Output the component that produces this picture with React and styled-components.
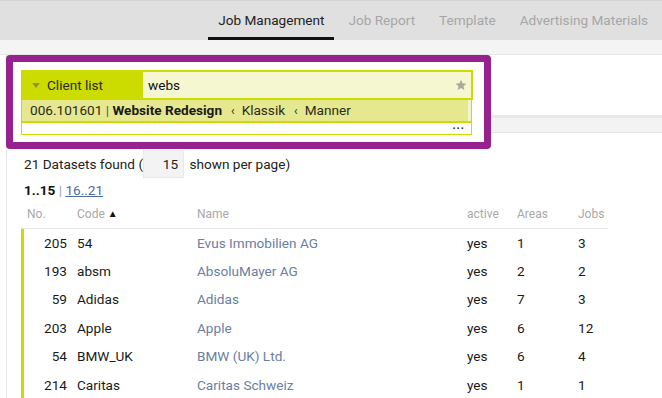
import React from "react";
import styled, { createGlobalStyle } from "styled-components";

const GlobalStyle = createGlobalStyle`
  html, body {
    margin: 0;
    padding: 0;
    background: #fff;
  }
  body {
    font-family: Roboto, "Liberation Sans", Arial, sans-serif;
    color: #222;
  }
  * {
    box-sizing: border-box;
  }
`;

const tabs = ["Job Management", "Job Report", "Template", "Advertising Materials"];

const clients = [
  { no: 205, code: "54", name: "Evus Immobilien AG", active: "yes", areas: 1, jobs: 3 },
  { no: 193, code: "absm", name: "AbsoluMayer AG", active: "yes", areas: 2, jobs: 2 },
  { no: 59, code: "Adidas", name: "Adidas", active: "yes", areas: 7, jobs: 3 },
  { no: 203, code: "Apple", name: "Apple", active: "yes", areas: 6, jobs: 12 },
  { no: 54, code: "BMW_UK", name: "BMW (UK) Ltd.", active: "yes", areas: 6, jobs: 4 },
  { no: 214, code: "Caritas", name: "Caritas Schweiz", active: "yes", areas: 1, jobs: 1 },
];

const App = () => {
  return (
    <>
      <GlobalStyle />
      <Page>
        <NavBar>
          {tabs.map((t, i) => (
            <Tab key={t} $active={i === 0}>
              {t}
            </Tab>
          ))}
        </NavBar>
        <SubBar />
        <Content>
          <SearchSlot />
          <Strip />
          <Body>
            <Summary>
              21 Datasets found (<CountBox>15</CountBox> shown per page)
            </Summary>
            <Pager>
              <b>1..15</b> <Sep>|</Sep> <PageLink>16..21</PageLink>
            </Pager>
            <Table>
              <HeadRow>
                <HeadCell>No.</HeadCell>
                <HeadCell>
                  Code <SortArrow>▲</SortArrow>
                </HeadCell>
                <HeadCell>Name</HeadCell>
                <HeadCell>active</HeadCell>
                <HeadCell>Areas</HeadCell>
                <HeadCell>Jobs</HeadCell>
              </HeadRow>
              <Rows>
                {clients.map((c) => (
                  <Row key={c.no}>
                    <NoCell>{c.no}</NoCell>
                    <Cell>{c.code}</Cell>
                    <NameCell>{c.name}</NameCell>
                    <Cell>{c.active}</Cell>
                    <Cell>{c.areas}</Cell>
                    <Cell>{c.jobs}</Cell>
                  </Row>
                ))}
              </Rows>
            </Table>
          </Body>
        </Content>

        <Highlight>
          <SearchRow>
            <ClientButton>
              <Caret />
              Client list
            </ClientButton>
            <SearchInput>
              <span>webs</span>
              <svg width="12" height="12" viewBox="0 0 24 24">
                <polygon
                  points="12,1.5 15.1,8.6 22.8,9.3 17,14.4 18.7,22 12,18 5.3,22 7,14.4 1.2,9.3 8.9,8.6"
                  fill="#a9aa99"
                />
              </svg>
            </SearchInput>
          </SearchRow>
          <Dropdown>
            <Suggestions>
              <Suggestion>
                006.101601 <Pipe>|</Pipe> <b>Website Redesign</b>
                <Crumb>‹</Crumb>Klassik<Crumb>‹</Crumb>Manner
              </Suggestion>
            </Suggestions>
            <More>...</More>
          </Dropdown>
        </Highlight>
      </Page>
    </>
  );
};

const Page = styled.div`
  position: relative;
  width: 662px;
  height: 398px;
  overflow: hidden;
`;

const NavBar = styled.nav`
  height: 40px;
  background: #e0e0e0;
  border-top: 1px solid #d4d4d4;
  display: flex;
  justify-content: flex-end;
  align-items: stretch;
  padding-right: 4px;
  gap: 4px;
`;

const Tab = styled.div`
  display: flex;
  align-items: center;
  padding: 2px 10px 0;
  font-size: 13.6px;
  color: ${(p) => (p.$active ? "#222" : "#a6a6a6")};
  border-bottom: 3px solid ${(p) => (p.$active ? "#111" : "transparent")};
`;

const SubBar = styled.div`
  height: 15px;
  background: #f4f4f4;
  border-bottom: 1px solid #e6e6e6;
`;

const Content = styled.main`
  margin-left: 6px;
  border-left: 1px solid #e6e6e6;
  height: 343px;
`;

const SearchSlot = styled.div`
  height: 60px;
`;

const Strip = styled.div`
  height: 18px;
  background: #f3f3f3;
  border-top: 3px solid #e8e8e8;
  border-bottom: 1px solid #e4e4e4;
`;

const Body = styled.div`
  padding: 17px 0 0 17px;
`;

const Summary = styled.div`
  height: 28px;
  line-height: 28px;
  font-size: 13.6px;
  color: #222;
  white-space: pre;
`;

const CountBox = styled.span`
  display: inline-block;
  vertical-align: top;
  text-align: right;
  width: 41px;
  height: 28px;
  line-height: 26px;
  padding-right: 5px;
  background: #f3f3f3;
  border: 1px solid #e9e9e9;
  margin-right: 2px;
`;

const Pager = styled.div`
  height: 24px;
  line-height: 24px;
  font-size: 13.6px;
  b {
    font-weight: 700;
    color: #111;
  }
`;

const Sep = styled.span`
  color: #9aa5b5;
`;

const PageLink = styled.a`
  color: #4a6e9c;
  text-decoration: underline;
`;

const Table = styled.div`
  margin-left: -3px;
  width: 587px;
`;

const cols = "53px 120px 270px 50px 61px 1fr";

const HeadRow = styled.div`
  display: grid;
  grid-template-columns: ${cols};
  height: 27px;
  align-items: center;
  padding-left: 3px;
  padding-bottom: 2px;
  border-bottom: 1px solid #e6e6e6;
`;

const HeadCell = styled.div`
  font-size: 12px;
  color: #a8a8a8;
  &:first-child {
    padding-left: 3px;
  }
`;

const SortArrow = styled.span`
  color: #111;
  font-size: 10px;
  position: relative;
  top: -1px;
`;

const Rows = styled.div`
  border-left: 3px solid #cddc00;
`;

const Row = styled.div`
  display: grid;
  grid-template-columns: ${cols};
  height: 28.4px;
  align-items: center;
  padding-bottom: 1px;
  font-size: 13.6px;
  color: #1a1a1a;
`;

const Cell = styled.div``;

const NoCell = styled.div`
  text-align: right;
  padding-right: 10px;
`;

const NameCell = styled.div`
  color: #6b7ea3;
`;

const Highlight = styled.section`
  position: absolute;
  top: 55px;
  left: 6px;
  width: 485px;
  height: 94px;
  border: 7px solid #97218f;
  border-radius: 4px;
  background: #fff;
  padding: 8px;
`;

const SearchRow = styled.div`
  display: flex;
  height: 30px;
  width: 452px;
`;

const ClientButton = styled.div`
  width: 122px;
  background: #cddc00;
  display: flex;
  align-items: center;
  gap: 7px;
  padding-left: 11px;
  font-size: 13.6px;
  color: #2a2a10;
`;

const Caret = styled.span`
  width: 0;
  height: 0;
  border-left: 4px solid transparent;
  border-right: 4px solid transparent;
  border-top: 5px solid #8e9630;
  margin-top: 1px;
`;

const SearchInput = styled.div`
  flex: 1;
  display: flex;
  align-items: center;
  justify-content: space-between;
  background: #f5f7d1;
  border: 2px solid #cddc00;
  border-left: none;
  padding: 0 4px 0 5px;
  font-size: 13.6px;
  color: #111;
`;

const Dropdown = styled.div`
  width: 451px;
  border: 1px solid #cddc00;
  border-top: none;
  background: #fff;
`;

const Suggestions = styled.div`
  background: #f2f5c9;
  padding-right: 3px;
  border-bottom: 2px solid #cddc00;
`;

const Suggestion = styled.div`
  height: 21px;
  line-height: 21px;
  padding-left: 8px;
  background: #e5e88e;
  font-size: 13.6px;
  color: #2b2b1a;
  white-space: pre;
  b {
    font-weight: 700;
    color: #1a1a1a;
  }
`;

const Pipe = styled.span`
  color: #555;
`;

const Crumb = styled.span`
  margin: 0 7px 0 9px;
  font-size: 12px;
`;

const More = styled.div`
  height: 11px;
  text-align: right;
  padding-right: 6px;
  font-size: 11px;
  font-weight: 700;
  line-height: 6px;
  letter-spacing: 1px;
  color: #223;
`;

export default App;
